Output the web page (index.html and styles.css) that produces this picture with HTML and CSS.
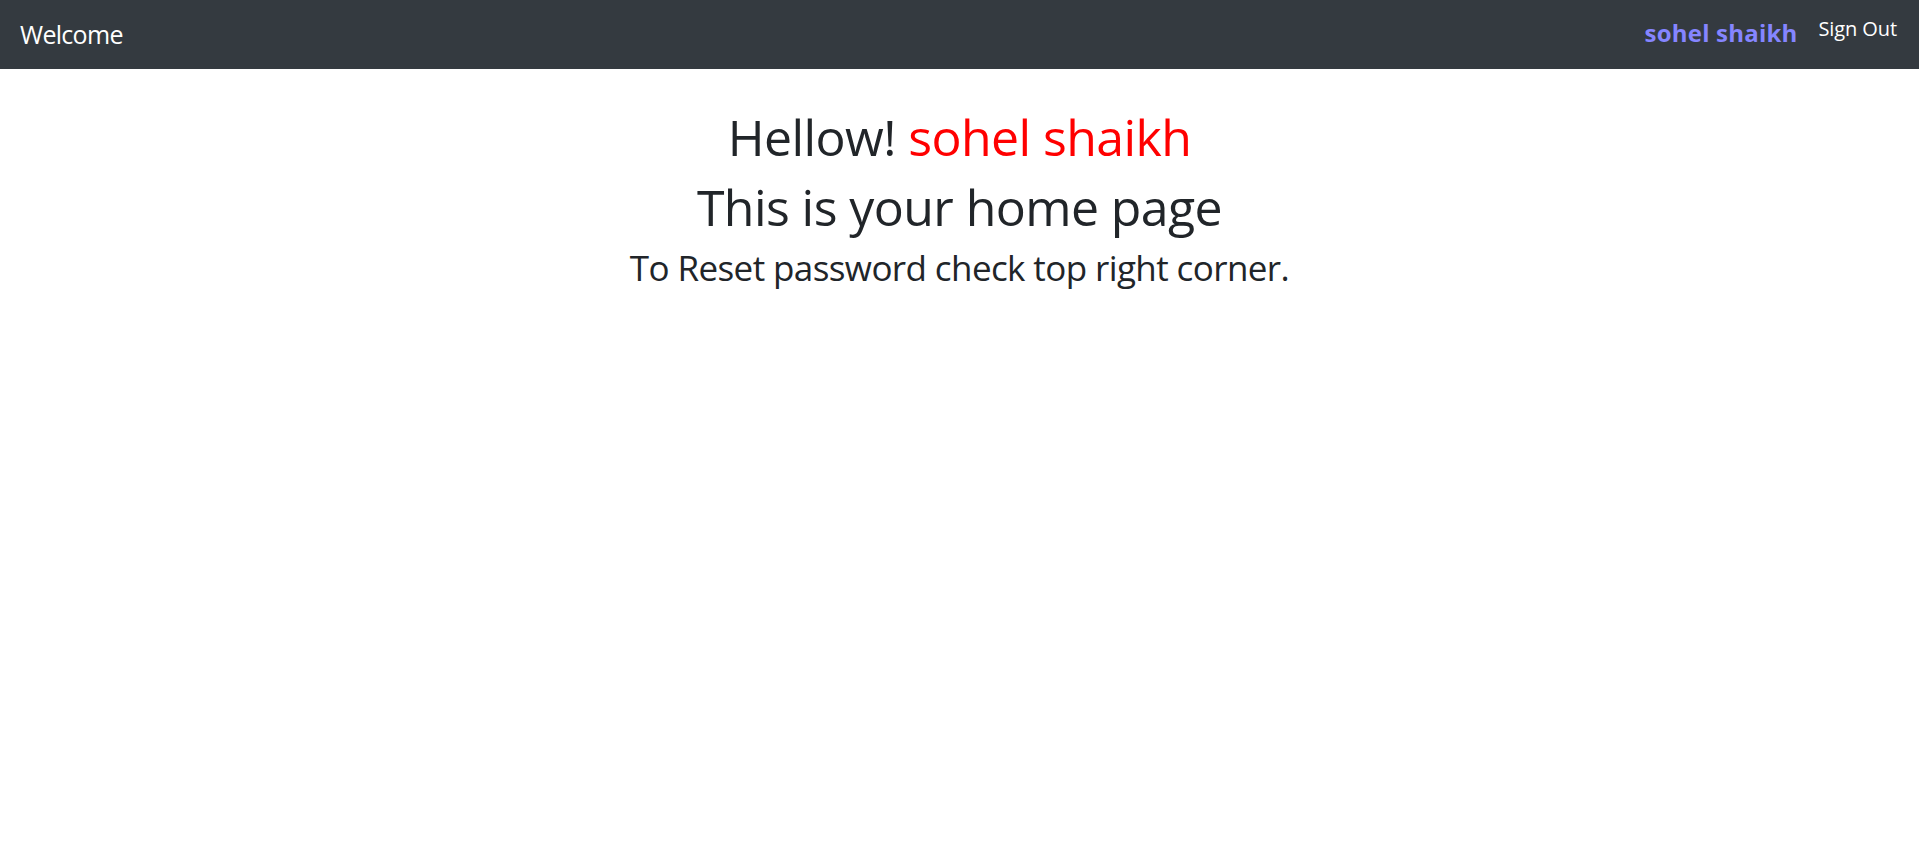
FILE: index.html
```html
<!DOCTYPE html>
<html lang="en">
<head>
<meta charset="utf-8">
<title>Welcome</title>
<link rel="stylesheet" href="styles.css">
</head>
<body>
<nav class="navbar">
  <a class="brand" href="#">Welcome</a>
  <div class="nav-right">
    <span class="user-name">sohel shaikh</span>
    <a class="sign-out" href="#">Sign Out</a>
  </div>
</nav>
<main class="content">
  <h1 class="title">Hellow! <span class="name-red">sohel shaikh</span></h1>
  <h1 class="title">This is your home page</h1>
  <h3 class="subtitle">To Reset password check top right corner.</h3>
</main>
</body>
</html>
```
FILE: styles.css
```css
* { box-sizing: border-box; }
html, body { margin: 0; padding: 0; }
body {
  font-family: "Open Sans", "Noto Sans", sans-serif;
  color: #212529;
  background: #fff;
}
.navbar {
  display: flex;
  justify-content: space-between;
  align-items: flex-start;
  height: 69px;
  background: #343a40;
  padding: 0 22px 0 20px;
}
.brand {
  margin-top: 18.5px;
  font-size: 25px;
  line-height: 30px;
  letter-spacing: -0.7px;
  color: #fff;
  text-decoration: none;
}
.nav-right {
  display: flex;
  align-items: flex-start;
}
.user-name {
  margin-top: 18px;
  font-size: 24px;
  line-height: 30px;
  font-weight: 700;
  letter-spacing: 0.2px;
  color: #8585ff;
}
.sign-out {
  margin-top: 17px;
  margin-left: 21px;
  font-size: 20px;
  line-height: 24px;
  letter-spacing: -0.1px;
  color: #fff;
  text-decoration: none;
}
.content {
  padding-top: 37.6px;
  text-align: center;
}
.title {
  margin: 0 0 10px;
  font-size: 50px;
  line-height: 60px;
  font-weight: 500;
  letter-spacing: -0.58px;
}
.name-red { color: #ff0000; }
.subtitle {
  margin: 0;
  font-size: 35px;
  line-height: 42px;
  font-weight: 500;
  letter-spacing: -0.6px;
}
```
